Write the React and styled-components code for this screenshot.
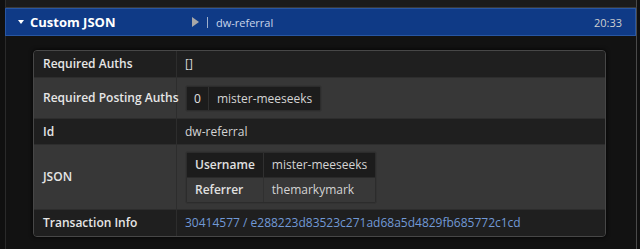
import React from 'react';
import styled, {createGlobalStyle} from "styled-components";

const GlobalStyle = createGlobalStyle`
  body {
    margin: 0;
    background: #101010;
    font-family: "Open Sans", "Liberation Sans", sans-serif;
    font-size: 12px;
  }
`

const Page = styled.div`
  width: 640px;
  height: 249px;
  overflow: hidden;
  background: #101010;
`

const PrevItem = styled.div`
  height: 7px;
  margin: 0 3px 0 5px;
  background: #1b1b1b;
  border-left: 1px solid #2e2e2e;
  border-right: 1px solid #4a4a4a;
  border-bottom: 1px solid #3a3a3a;
`

const Item = styled.div`
  margin: 0 3px 0 5px;
  border-right: 1px solid #4a4a4a;
  border-left: 1px solid #2a2a2a;
`

const Header = styled.div`
  display: flex;
  align-items: center;
  height: 26px;
  margin-left: -1px;
  padding: 0 13px 0 12px;
  background: #0f3a86;
  border: 1px solid #2856a2;
  color: #fff;
`

const Caret = styled.span`
  width: 0;
  height: 0;
  border-left: 3.5px solid transparent;
  border-right: 3.5px solid transparent;
  border-top: 4px solid #fff;
  margin-right: 6px;
`

const Title = styled.span`
  width: 162px;
  font-weight: 700;
  font-size: 13px;
`

const Summary = styled.span`
  display: flex;
  align-items: center;
  color: #c9d5ea;
  font-size: 11px;
`

const Play = styled.span`
  width: 0;
  height: 0;
  border-top: 5px solid transparent;
  border-bottom: 5px solid transparent;
  border-left: 7px solid #a8a8a8;
  margin-right: 8px;
`

const Pipe = styled.span`
  width: 1px;
  height: 11px;
  background: #9fb0cc;
  margin-right: 8px;
`

const Time = styled.span`
  margin-left: auto;
  font-size: 11px;
  color: #d0d0d0;
`

const Body = styled.div`
  padding: 14px 30px 13px 27px;
  background: #121212;
`

const Card = styled.div`
  background: #222;
  border: 1px solid #474747;
  border-radius: 4px;
  box-shadow: 0 0 4px rgba(0, 0, 0, 0.9);
  overflow: hidden;
`

const Row = styled.div`
  display: grid;
  grid-template-columns: 143px 1fr;
  background: ${p => p.$light ? "#373737" : "#1f1f1f"};
  border-bottom: ${p => p.$last ? "none" : "1px solid #2d2d2d"};
`

const Label = styled.div`
  display: flex;
  align-items: center;
  padding: 2px 2px 2px 9px;
  line-height: 18px;
  font-weight: 600;
  white-space: nowrap;
  color: #e6e6e6;
  border-right: 1px solid #2d2d2d;
`

const Value = styled.div`
  display: flex;
  align-items: center;
  padding: ${p => p.$pad || "4px 8px"};
  line-height: 18px;
  color: #d4d4d4;
`

const Link = styled.span`
  color: #7199d6;
`

const Nested = styled.div`
  display: inline-grid;
  grid-template-columns: auto auto;
  padding: 1px;
  background: #2c2c2c;
  border: 1px solid #333;
  border-radius: 3px;
`

const Key = styled.div`
  padding: ${p => p.$pad || "3px 8px"};
  line-height: 18px;
  font-weight: ${p => p.$bold ? 600 : 400};
  color: #e0e0e0;
  background: ${p => p.$light ? "#383838" : "#1c1c1c"};
  border-right: 1px solid #303030;
  border-bottom: ${p => p.$last ? "none" : "1px solid #2a2a2a"};
`

const Val = styled.div`
  padding: ${p => p.$pad || "3px 8px"};
  line-height: 18px;
  color: #d4d4d4;
  background: ${p => p.$light ? "#383838" : "#1c1c1c"};
  border-bottom: ${p => p.$last ? "none" : "1px solid #2a2a2a"};
`

function App() {
    return (
        <Page>
            <GlobalStyle/>
            <PrevItem/>
            <Item>
                <Header>
                    <Caret/>
                    <Title>Custom JSON</Title>
                    <Summary>
                        <Play/>
                        <Pipe/>
                        dw-referral
                    </Summary>
                    <Time>20:33</Time>
                </Header>
                <Body>
                    <Card>
                        <Row>
                            <Label>Required Auths</Label>
                            <Value>[]</Value>
                        </Row>
                        <Row $light>
                            <Label>Required Posting Auths</Label>
                            <Value $pad="7px 8px 6px">
                                <Nested>
                                    <Key $last $pad="3px 7px 2px">0</Key>
                                    <Val $last $pad="3px 8px 2px">mister-meeseeks</Val>
                                </Nested>
                            </Value>
                        </Row>
                        <Row>
                            <Label>Id</Label>
                            <Value $pad="4px 8px 3px">dw-referral</Value>
                        </Row>
                        <Row $light>
                            <Label>JSON</Label>
                            <Value $pad="6px 8px 5px">
                                <Nested>
                                    <Key $bold>Username</Key>
                                    <Val>mister-meeseeks</Val>
                                    <Key $bold $light $last>Referrer</Key>
                                    <Val $light $last>themarkymark</Val>
                                </Nested>
                            </Value>
                        </Row>
                        <Row $last>
                            <Label>Transaction Info</Label>
                            <Value>
                                <Link>30414577 / e288223d83523c271ad68a5d4829fb685772c1cd</Link>
                            </Value>
                        </Row>
                    </Card>
                </Body>
            </Item>
        </Page>
    );
}

export default App;
